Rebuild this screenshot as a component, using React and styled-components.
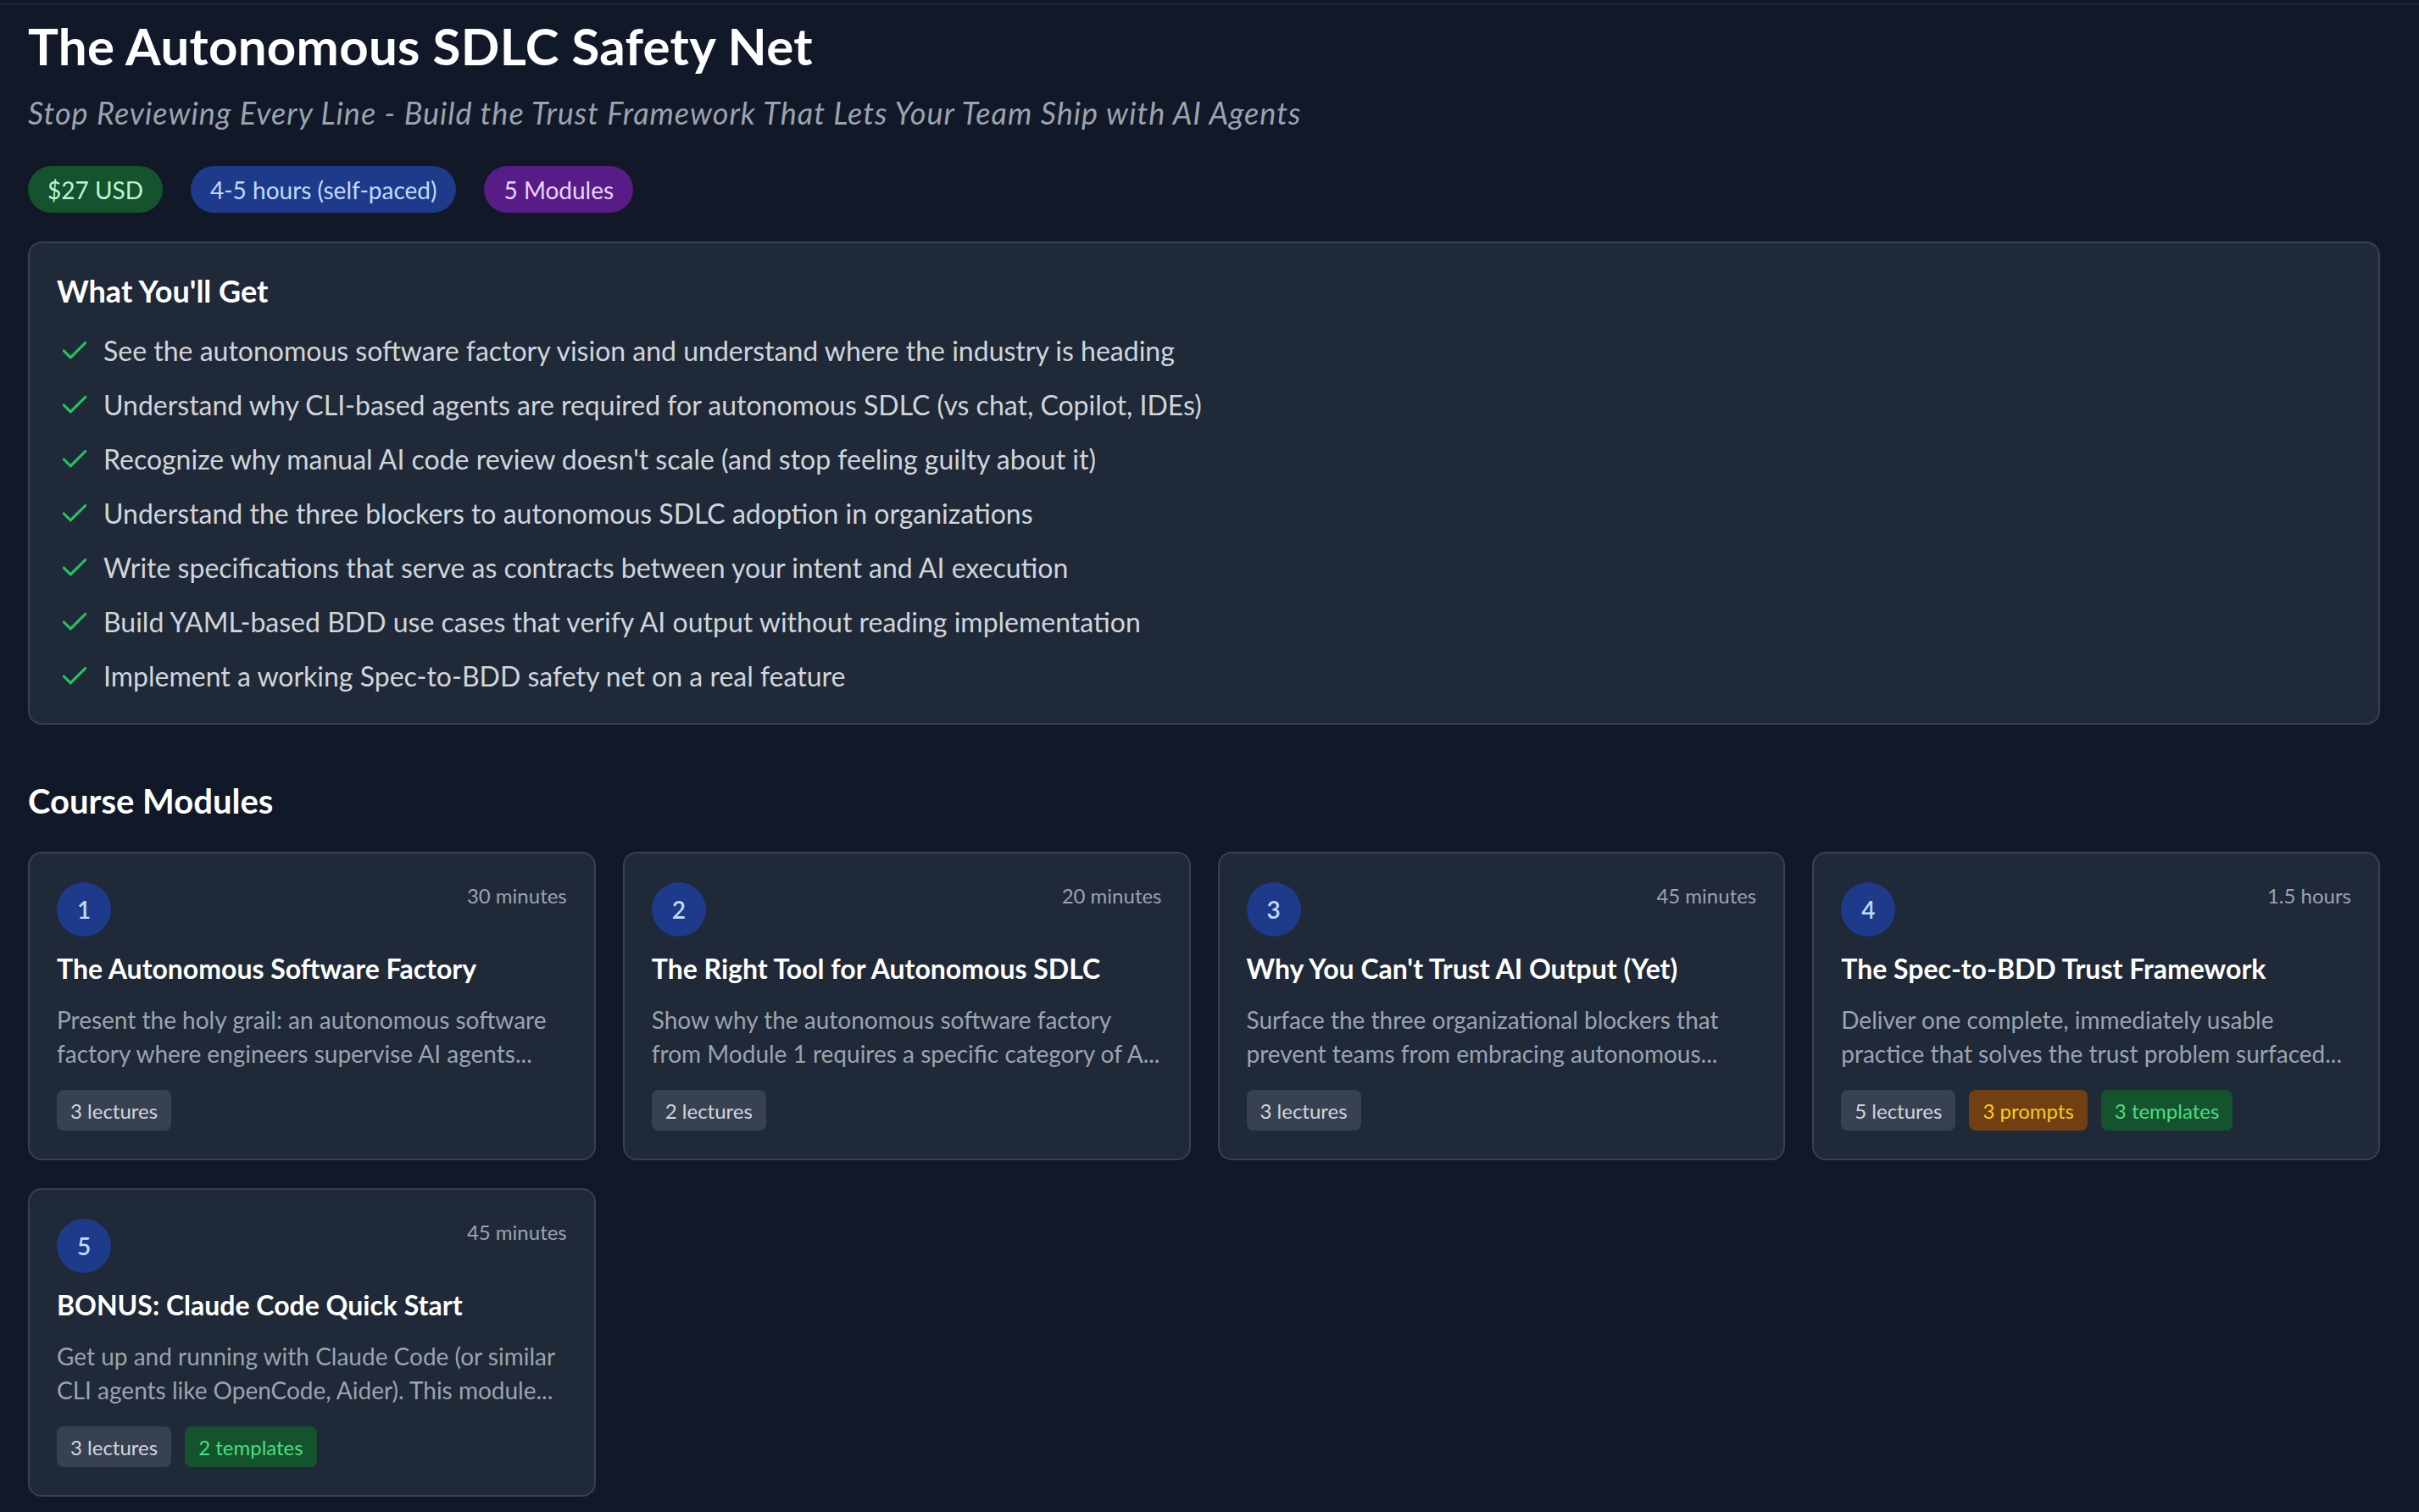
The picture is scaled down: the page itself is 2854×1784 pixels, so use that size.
import React from 'react';
import styled, { createGlobalStyle } from 'styled-components';
import { Check } from 'lucide-react';

const GlobalStyle = createGlobalStyle`
  body {
    margin: 0;
    background: #111827;
    font-family: Lato, "Noto Sans", sans-serif;
  }
`;

const TopRule = styled.div`
  height: 2px;
  margin-top: 4px;
  background: #1f2937;
`;

const Page = styled.main`
  padding: 12px 46px 40px 33px;
`;

const Title = styled.h1`
  margin: 0;
  font-size: 60px;
  line-height: 72px;
  font-weight: 700;
  color: #ffffff;
  letter-spacing: 0.3px;
`;

const Subtitle = styled.p`
  margin: 22px 0 0;
  font-size: 36px;
  line-height: 43px;
  font-style: italic;
  letter-spacing: 1px;
  color: #9ca3af;
`;

const BadgeRow = styled.div`
  display: flex;
  gap: 33px;
  margin-top: 41px;
`;

const badgeTones = {
  green: { bg: '#14532d', fg: '#bbf7d0' },
  blue: { bg: '#1e3a8a', fg: '#bfdbfe' },
  purple: { bg: '#581c87', fg: '#e9d5ff' },
};

const Badge = styled.span`
  display: inline-flex;
  align-items: center;
  height: 55px;
  padding: 0 23px;
  border-radius: 9999px;
  font-size: 28px;
  background: ${(p) => badgeTones[p.$tone].bg};
  color: ${(p) => badgeTones[p.$tone].fg};
`;

const Panel = styled.section`
  margin-top: 34px;
  padding: 32px 32px 31px;
  background: #1f2937;
  border: 2px solid #374151;
  border-radius: 16px;
`;

const PanelHeading = styled.h2`
  margin: 0 0 23px;
  font-size: 36px;
  line-height: 48px;
  font-weight: 700;
  color: #ffffff;
`;

const List = styled.ul`
  list-style: none;
  margin: 0;
  padding: 0;
  display: flex;
  flex-direction: column;
  gap: 16px;
`;

const Item = styled.li`
  display: flex;
  align-items: center;
  gap: 15px;
  font-size: 32px;
  line-height: 48px;
  color: #d1d5db;

  svg {
    flex-shrink: 0;
    margin-left: 2px;
    color: #22c55e;
  }
`;

const SectionHeading = styled.h2`
  margin: 66px 0 36px;
  font-size: 40px;
  line-height: 48px;
  font-weight: 700;
  color: #ffffff;
`;

const ModuleGrid = styled.div`
  display: grid;
  grid-template-columns: repeat(4, 1fr);
  gap: 33px 32px;
`;

const Card = styled.article`
  padding: 34px 32px 33px;
  background: #1f2937;
  border: 2px solid #374151;
  border-radius: 16px;
`;

const CardHead = styled.div`
  display: flex;
  justify-content: space-between;
  align-items: flex-start;
`;

const NumberDot = styled.span`
  display: flex;
  align-items: center;
  justify-content: center;
  width: 64px;
  height: 64px;
  border-radius: 50%;
  background: #1e3a8a;
  color: #bfdbfe;
  font-size: 28px;
  font-weight: 600;
`;

const Duration = styled.span`
  margin-top: 1px;
  font-size: 24px;
  color: #9ca3af;
`;

const CardTitle = styled.h3`
  margin: 14px 0 0;
  font-size: 32px;
  line-height: 48px;
  font-weight: 700;
  color: #ffffff;
`;

const CardText = styled.p`
  margin: 16px 0 0;
  font-size: 28px;
  line-height: 40px;
  color: #9ca3af;
  display: -webkit-box;
  -webkit-line-clamp: 2;
  -webkit-box-orient: vertical;
  overflow: hidden;
`;

const TagRow = styled.div`
  display: flex;
  gap: 16px;
  margin-top: 23px;
`;

const tagTones = {
  gray: { bg: '#374151', fg: '#d1d5db' },
  amber: { bg: '#713f12', fg: '#facc15' },
  green: { bg: '#14532d', fg: '#4ade80' },
};

const Tag = styled.span`
  display: inline-flex;
  align-items: center;
  height: 48px;
  padding: 0 16px;
  border-radius: 8px;
  font-size: 24px;
  background: ${(p) => tagTones[p.$tone].bg};
  color: ${(p) => tagTones[p.$tone].fg};
`;

const outcomes = [
  'See the autonomous software factory vision and understand where the industry is heading',
  'Understand why CLI-based agents are required for autonomous SDLC (vs chat, Copilot, IDEs)',
  "Recognize why manual AI code review doesn't scale (and stop feeling guilty about it)",
  'Understand the three blockers to autonomous SDLC adoption in organizations',
  'Write specifications that serve as contracts between your intent and AI execution',
  'Build YAML-based BDD use cases that verify AI output without reading implementation',
  'Implement a working Spec-to-BDD safety net on a real feature',
];

const modules = [
  {
    n: 1,
    time: '30 minutes',
    title: 'The Autonomous Software Factory',
    text: ['Present the holy grail: an autonomous software', 'factory where engineers supervise AI agents...'],
    tags: [['gray', '3 lectures']],
  },
  {
    n: 2,
    time: '20 minutes',
    title: 'The Right Tool for Autonomous SDLC',
    text: ['Show why the autonomous software factory', 'from Module 1 requires a specific category of A...'],
    tags: [['gray', '2 lectures']],
  },
  {
    n: 3,
    time: '45 minutes',
    title: "Why You Can't Trust AI Output (Yet)",
    text: ['Surface the three organizational blockers that', 'prevent teams from embracing autonomous...'],
    tags: [['gray', '3 lectures']],
  },
  {
    n: 4,
    time: '1.5 hours',
    title: 'The Spec-to-BDD Trust Framework',
    text: ['Deliver one complete, immediately usable', 'practice that solves the trust problem surfaced...'],
    tags: [
      ['gray', '5 lectures'],
      ['amber', '3 prompts'],
      ['green', '3 templates'],
    ],
  },
  {
    n: 5,
    time: '45 minutes',
    title: 'BONUS: Claude Code Quick Start',
    text: ['Get up and running with Claude Code (or similar', 'CLI agents like OpenCode, Aider). This module...'],
    tags: [
      ['gray', '3 lectures'],
      ['green', '2 templates'],
    ],
  },
];

const App = () => (
  <>
    <GlobalStyle />
    <TopRule />
    <Page>
      <Title>The Autonomous SDLC Safety Net</Title>
      <Subtitle>Stop Reviewing Every Line - Build the Trust Framework That Lets Your Team Ship with AI Agents</Subtitle>

      <BadgeRow>
        <Badge $tone="green">$27 USD</Badge>
        <Badge $tone="blue">4-5 hours (self-paced)</Badge>
        <Badge $tone="purple">5 Modules</Badge>
      </BadgeRow>

      <Panel>
        <PanelHeading>What You'll Get</PanelHeading>
        <List>
          {outcomes.map((o) => (
            <Item key={o}>
              <Check size={38} strokeWidth={2} />
              {o}
            </Item>
          ))}
        </List>
      </Panel>

      <SectionHeading>Course Modules</SectionHeading>
      <ModuleGrid>
        {modules.map((m) => (
          <Card key={m.n}>
            <CardHead>
              <NumberDot>{m.n}</NumberDot>
              <Duration>{m.time}</Duration>
            </CardHead>
            <CardTitle>{m.title}</CardTitle>
            <CardText>
              {m.text[0]}
              <br />
              {m.text[1]}
            </CardText>
            <TagRow>
              {m.tags.map(([tone, label]) => (
                <Tag key={label} $tone={tone}>{label}</Tag>
              ))}
            </TagRow>
          </Card>
        ))}
      </ModuleGrid>
    </Page>
  </>
);

export default App;
